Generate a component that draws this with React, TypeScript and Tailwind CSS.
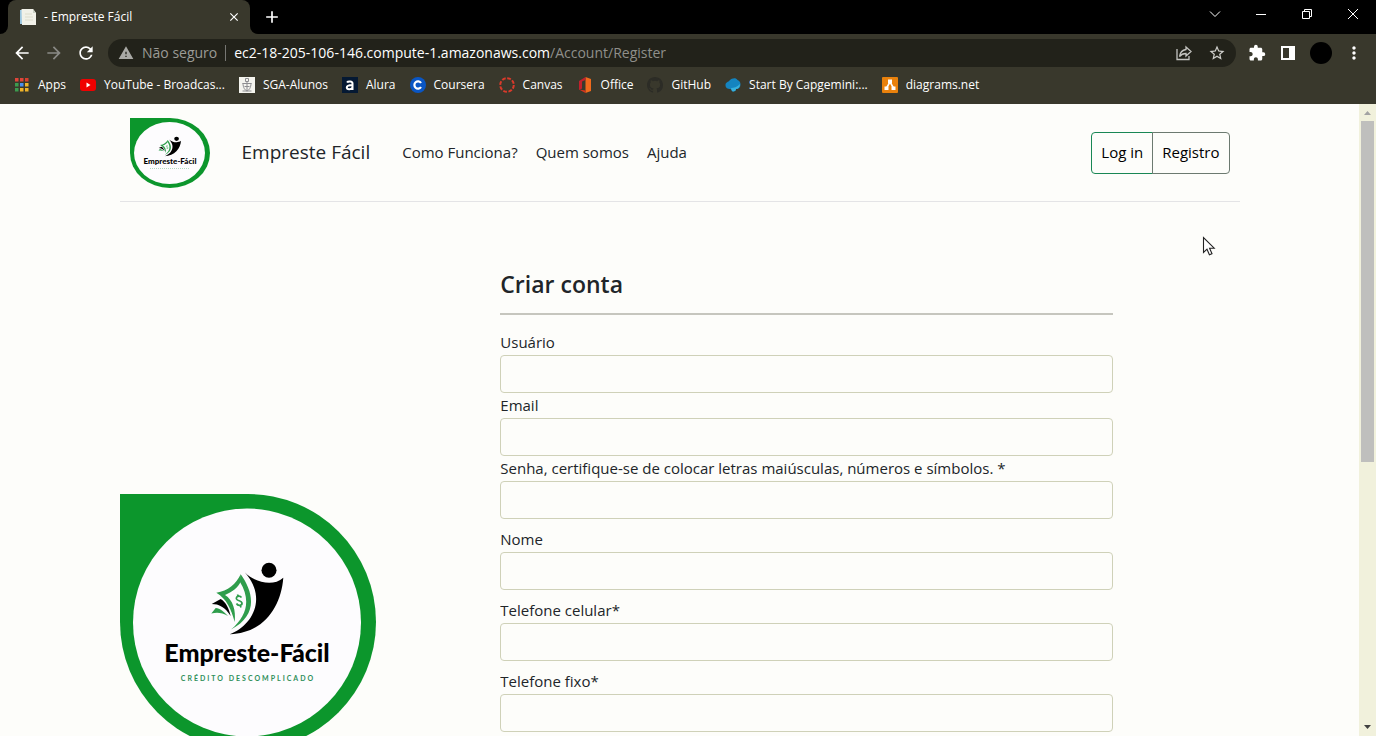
import type { ReactNode } from "react";
import {
  MdArrowBack,
  MdArrowForward,
  MdRefresh,
  MdWarning,
  MdStarBorder,
  MdExtension,
  MdMoreVert,
  MdClose,
  MdAdd,
} from "react-icons/md";

function TabIcon() {
  return (
    <svg className="size-4" viewBox="0 0 16 16" aria-hidden="true">
      <path d="M0 1h5v14H0z" fill="#9cc7e0" />
      <path d="M1.500 0H13l3 4v12H2z" fill="#f1f1e8" />
      <path d="M13 0v4h3z" fill="#c9cfc2" />
      <path d="M5 5h7M5 8h8M5 11h8" stroke="#dcdccb" />
    </svg>
  );
}

function AppsIcon() {
  const colors = ["#e0453a", "#e0453a", "#d8402f", "#3c9b4f", "#4a8ff0", "#f0b429", "#3c9b4f", "#f0b429", "#f0b429"];
  return (
    <svg className="size-4" viewBox="0 0 16 16" aria-hidden="true">
      {colors.map((c, i) => (
        <rect key={i} x={1 + (i % 3) * 5} y={1 + Math.floor(i / 3) * 5} width="3.500" height="3.500" fill={c} />
      ))}
    </svg>
  );
}

function YoutubeIcon() {
  return (
    <svg className="size-4" viewBox="0 0 16 16" aria-hidden="true">
      <rect x="0" y="2" width="16" height="12" rx="3" fill="#f00000" />
      <path d="M6.500 5.500v5l4-2.500z" fill="#fff" />
    </svg>
  );
}

function SgaIcon() {
  return (
    <svg className="size-4" viewBox="0 0 16 16" aria-hidden="true">
      <rect width="16" height="16" fill="#f4f4ee" />
      <path d="M6.500 1.500h3v3h-3zM3.500 6.500h9M4 6c0 5 2 7 4 8 2-1 4-3 4-8M8 4v10M5.500 9.500h5M3.500 14h9" stroke="#8d8d90" fill="none" />
    </svg>
  );
}

function AluraIcon() {
  return (
    <svg className="size-4" viewBox="0 0 16 16" aria-hidden="true">
      <rect width="16" height="16" fill="#051933" />
      <path d="M5 5.500c1-1.500 5.500-1.500 5.500 1V13M10.500 8C7 8 4.800 8.500 4.800 10.500S9 13 10.500 10.500" stroke="#fff" strokeWidth="2" fill="none" />
    </svg>
  );
}

function CourseraIcon() {
  return (
    <svg className="size-4" viewBox="0 0 16 16" aria-hidden="true">
      <circle cx="8" cy="8" r="8" fill="#0a56c4" />
      <path d="M11 6a3.600 3.600 0 1 0 0 4" stroke="#fff" strokeWidth="2.200" fill="none" />
    </svg>
  );
}

function CanvasIcon() {
  return (
    <svg className="size-4" viewBox="0 0 16 16" aria-hidden="true">
      <circle cx="8" cy="8" r="6.800" fill="none" stroke="#d93a2b" strokeWidth="2" strokeDasharray="3.800 1.540" />
    </svg>
  );
}

function OfficeIcon() {
  return (
    <svg className="size-4" viewBox="0 0 16 16" aria-hidden="true">
      <path d="M8.500 0L14 2v12l-5.500 2z" fill="#f06a1c" />
      <path d="M8.500 0v3L5 4.500v7L2 13V4z" fill="#c1202c" />
      <path d="M2 12.500l6.500 1V16z" fill="#d8331d" />
    </svg>
  );
}

function GithubIcon() {
  return (
    <svg className="size-4" viewBox="0 0 16 16" aria-hidden="true">
      <path
        fill="#2c2c26"
        d="M8 0C3.580 0 0 3.580 0 8c0 3.540 2.290 6.530 5.470 7.590.400.070.550-.170.550-.380v-1.490c-2.010.370-2.530-.490-2.690-.940-.090-.230-.480-.940-.820-1.130-.280-.150-.680-.520-.010-.530.630-.010 1.080.580 1.230.820.720 1.210 1.870.870 2.330.660.070-.520.280-.870.510-1.070-1.780-.200-3.640-.890-3.640-3.950 0-.870.310-1.590.820-2.150-.080-.200-.360-1.020.080-2.120 0 0 .670-.210 2.200.820a7.600 7.600 0 0 1 4 0c1.530-1.040 2.200-.820 2.200-.820.440 1.100.160 1.920.080 2.120.510.560.820 1.270.820 2.150 0 3.070-1.870 3.750-3.650 3.950.290.250.540.730.540 1.480v2.200c0 .210.150.460.550.380A8 8 0 0 0 16 8c0-4.420-3.580-8-8-8z"
      />
    </svg>
  );
}

function CapgeminiIcon() {
  return (
    <svg className="size-4" viewBox="0 0 16 16" aria-hidden="true">
      <path d="M0.500 8c0-3 3-3 4-4.500C7 1 11 .500 12.500 3c2 .500 3 2.500 3 4.500 0 3-2 4.500-4.500 4.500 0 1.500-1 2.500-3 2.500-1 0-1.500-1.500-2.500-2.500-3 0-5-1-5-4z" fill="#1484c0" />
      <path d="M6 11c3 0 6-1 9-4 0 3-1.500 5-4 5 0 1.500-1 2.500-3 2.500-1 0-1.500-1.500-2-3.500z" fill="#37b1dd" />
    </svg>
  );
}

function DiagramsIcon() {
  return (
    <svg className="size-4" viewBox="0 0 16 16" aria-hidden="true">
      <rect width="16" height="16" rx="1" fill="#e9810c" />
      <path d="M8 5L4.500 11M8 5l3.500 6" stroke="#fff" strokeWidth="1.500" />
      <path d="M6 2.500h4v4H6zM2.500 9.500h4v3.500h-4zM9.500 9.500h4v3.500h-4z" fill="#fff" />
    </svg>
  );
}

const bookmarks: { label: string; icon: ReactNode }[] = [
  { label: "Apps", icon: <AppsIcon /> },
  { label: "YouTube - Broadcas...", icon: <YoutubeIcon /> },
  { label: "SGA-Alunos", icon: <SgaIcon /> },
  { label: "Alura", icon: <AluraIcon /> },
  { label: "Coursera", icon: <CourseraIcon /> },
  { label: "Canvas", icon: <CanvasIcon /> },
  { label: "Office", icon: <OfficeIcon /> },
  { label: "GitHub", icon: <GithubIcon /> },
  { label: "Start By Capgemini:...", icon: <CapgeminiIcon /> },
  { label: "diagrams.net", icon: <DiagramsIcon /> },
];

function WindowButton({ label, children }: { label: string; children: ReactNode }) {
  return (
    <button type="button" aria-label={label} className="flex h-7 w-[46px] items-center justify-center">
      <svg className="size-3" viewBox="0 0 12 12" fill="none" stroke="#fff" aria-hidden="true">
        {children}
      </svg>
    </button>
  );
}

function BrowserChrome() {
  return (
    <header className="shrink-0 bg-[#39382c] text-white">
      <div className="flex h-[34px] items-end bg-black">
        <div className="flex h-full w-2 items-end bg-[#39382c]">
          <div className="h-full w-full rounded-br-lg bg-black" />
        </div>
        <div className="flex h-[34px] w-[242px] items-center gap-2 rounded-t-lg bg-[#39382c] pr-2 pl-3">
          <TabIcon />
          <span className="flex-1 truncate text-xs">- Empreste Fácil</span>
          <button type="button" aria-label="Fechar guia" className="flex size-4 items-center justify-center">
            <MdClose className="size-3.5" />
          </button>
        </div>
        <div className="flex h-full w-2 items-end bg-[#39382c]">
          <div className="h-full w-full rounded-bl-lg bg-black" />
        </div>
        <button type="button" aria-label="Nova guia" className="flex h-[34px] w-7 items-center justify-center">
          <MdAdd className="size-5" />
        </button>
        <div className="ml-auto flex h-[34px] items-start">
          <WindowButton label="Pesquisar guias">
            <path d="M1 3.500l5 5 5-5" />
          </WindowButton>
          <WindowButton label="Minimizar">
            <path d="M1 6.500h10" />
          </WindowButton>
          <WindowButton label="Restaurar">
            <path d="M1.500 3.500h7v7h-7zM3.500 3.500v-2h7v7h-2" />
          </WindowButton>
          <WindowButton label="Fechar">
            <path d="M1 1l10 10M11 1L1 11" />
          </WindowButton>
        </div>
      </div>

      <div className="flex h-[38px] items-center px-3">
        <div className="flex items-center gap-3">
          <button type="button" aria-label="Voltar">
            <MdArrowBack className="size-5" />
          </button>
          <button type="button" aria-label="Avançar" className="text-[#8a8a86]">
            <MdArrowForward className="size-5" />
          </button>
          <button type="button" aria-label="Recarregar">
            <MdRefresh className="size-5" />
          </button>
        </div>
        <div className="ml-3 flex h-7 flex-1 items-center rounded-full bg-[#22221a] px-2.5 text-sm">
          <MdWarning className="size-4 text-[#a9a9a5]" />
          <span className="ml-2 text-[#9b9b96]">Não seguro</span>
          <span className="mx-2 h-4 w-px bg-[#777773]" />
          <span className="flex-1 truncate text-[#8f8f8a]">
            <span className="text-white">ec2-18-205-106-146.compute-1.amazonaws.com</span>/Account/Register
          </span>
          <button type="button" aria-label="Compartilhar" className="mr-4">
            <svg className="size-4" viewBox="0 0 16 16" fill="none" stroke="#c4c4c0" strokeWidth="1.300" aria-hidden="true">
              <path d="M1 4v10.500h12V11" />
              <path d="M10 2l5 4.500-5 4.500V8.500C7 8.500 5 9.500 3.500 11.500 4 8 6 5 10 4.500z" />
            </svg>
          </button>
          <button type="button" aria-label="Favoritar" className="text-[#d0d0cc]">
            <MdStarBorder className="size-[18px]" />
          </button>
        </div>
        <div className="ml-3 flex items-center gap-3">
          <button type="button" aria-label="Extensões">
            <MdExtension className="size-[18px]" />
          </button>
          <button type="button" aria-label="Painel lateral" className="px-0.5">
            <svg className="size-4" viewBox="0 0 16 16" aria-hidden="true">
              <path fillRule="evenodd" d="M1 1h14v14H1zM3 3v10h6V3z" fill="#fff" />
            </svg>
          </button>
          <button type="button" aria-label="Perfil" className="size-[22px] rounded-full bg-black" />
          <button type="button" aria-label="Menu">
            <MdMoreVert className="size-5" />
          </button>
        </div>
      </div>

      <nav aria-label="Favoritos" className="flex h-8 items-start gap-3.5 overflow-hidden pt-1 pl-3.5">
        {bookmarks.map((b) => (
          <a key={b.label} href="#" className="flex h-[18px] shrink-0 items-center gap-2 text-xs whitespace-nowrap">
            {b.icon}
            {b.label}
          </a>
        ))}
      </nav>
    </header>
  );
}

function LogoMark() {
  return (
    <>
      <circle cx="149" cy="76.300" r="7.500" fill="#000" />
      <path d="M124.700 78.300C133 87 152 94 163.300 83.700C161 113 144 139 109.700 140.300C132 132 148 104 124.700 78.300Z" fill="#000" />
      <path d="M120.700 80.300C134 99 138 121 111 135.500C127 122 131 106 120 88Z" fill="#2f9d4c" />
      <path d="M120.700 80.300C116 90 108 97 96.300 98.700C107 105 111 115 114.700 128C116 116 113 106 105 101C112 98 118 94 121 87Z" fill="#2f9d4c" />
      <path d="M91.700 110L100.700 105C106 108 109 115 110.700 122C105 113 99 110 91.700 110Z" fill="#000" />
      <path d="M91.300 119.500L95.700 114C100 114 104 118 108 122C102 118.500 97 118 91.300 119.500Z" fill="#2f9d4c" />
      <path
        d="M121.500 103.500C119.500 101 115.500 102.500 116.500 105C117.500 107.500 121.500 106 122 109C122.300 111.500 118 112.500 116.500 109.500M117.500 100.500L118.300 102.500M120.300 111.500L121 113.500"
        fill="none"
        stroke="#2f9d4c"
        strokeWidth="1.700"
      />
    </>
  );
}

function LargeLogo() {
  return (
    <svg className="w-64 shrink-0" viewBox="0 0 256 256" role="img" aria-label="Empreste-Fácil">
      <path d="M0 0H128A128 128 0 1 1 0 128Z" fill="#0c962c" />
      <circle cx="127" cy="128.500" r="114" fill="#fdfcfe" />
      <LogoMark />
      <text x="127" y="168" textAnchor="middle" className="font-['Lato'] text-[25px] font-black" fill="#000">
        Empreste-Fácil
      </text>
      <text x="128" y="187" textAnchor="middle" className="font-['Lato'] text-[7px] font-bold tracking-[2px]" fill="#2f8f5a">
        CRÉDITO DESCOMPLICADO
      </text>
    </svg>
  );
}

function SmallLogo() {
  return (
    <svg className="w-20 shrink-0" viewBox="0 0 80 70" role="img" aria-label="Empreste-Fácil">
      <path d="M0 0H40A40 35 0 1 1 0 35Z" fill="#0c962c" />
      <ellipse cx="39.500" cy="35" rx="35.500" ry="31" fill="#fdfcfe" />
      <g transform="scale(0.3125 0.273)">
        <LogoMark />
      </g>
      <text x="40" y="46" textAnchor="middle" className="font-['Lato'] text-[8px] font-black" fill="#000">
        Empreste-Fácil
      </text>
      <path d="M20 50.500h40" stroke="#b5d9c1" strokeDasharray="1 1" />
    </svg>
  );
}

function Field({ id, label, type = "text", spaced = false }: { id: string; label: string; type?: string; spaced?: boolean }) {
  return (
    <div className={spaced ? "mt-2" : ""}>
      <label htmlFor={id} className="block h-[25px] truncate leading-6">
        {label}
      </label>
      <input
        id={id}
        type={type}
        className="block h-[38px] w-full rounded border border-[#cfd1b8] bg-transparent px-3 outline-none"
      />
    </div>
  );
}

function Scrollbar() {
  return (
    <div className="flex w-[17px] shrink-0 flex-col items-center bg-[#f1f1dc]" aria-hidden="true">
      <svg className="h-[17px] w-[17px] shrink-0" viewBox="0 0 17 17">
        <path d="M5 11l3.500-4 3.500 4z" fill="#a3a3a3" />
      </svg>
      <div className="flex w-full flex-1 flex-col px-0.5">
        <div className="h-[57%] w-full bg-[#bfbfbd]" />
      </div>
      <svg className="h-[17px] w-[17px] shrink-0" viewBox="0 0 17 17">
        <path d="M5 6l3.500 4L12 6z" fill="#404040" />
      </svg>
    </div>
  );
}

export default function App() {
  return (
    <div className="relative flex h-screen flex-col overflow-hidden bg-[#fdfdfa] font-['Open_Sans','Noto_Sans',sans-serif]">
      <BrowserChrome />
      <div className="flex min-h-0 flex-1">
        <div className="min-w-0 flex-1 overflow-hidden text-[15px] text-[#212529]">
          <div className="mx-auto max-w-[1120px]">
            <nav aria-label="Principal" className="flex h-[98px] items-center border-b border-[#e4e4e6] px-2.5">
              <SmallLogo />
              <a href="#" className="ml-8 text-[19px]">
                Empreste Fácil
              </a>
              <div className="ml-8 flex gap-[18px]">
                <a href="#">Como Funciona?</a>
                <a href="#">Quem somos</a>
                <a href="#">Ajuda</a>
              </div>
              <div className="ml-auto flex text-black">
                <a href="#" className="flex h-[42px] items-center rounded-l border border-[#198754] px-[9px]">
                  Log in
                </a>
                <a href="#" className="-ml-px flex h-[42px] items-center rounded-r border border-[#6c7a70] px-[9px]">
                  Registro
                </a>
              </div>
            </nav>

            <main className="grid grid-cols-[340fr_547fr_113fr] pt-16">
              <aside className="pt-[228px]">
                <LargeLogo />
              </aside>
              <form>
                <h1 className="text-[23px] leading-9 font-semibold">Criar conta</h1>
                <hr className="mt-[11px] mb-[15px] border-t-2 border-[#c6c6be]" />
                <Field id="usuario" label="Usuário" />
                <Field id="email" label="Email" type="email" />
                <Field id="senha" label="Senha, certifique-se de colocar letras maiúsculas, números e símbolos. *" type="password" />
                <Field id="nome" label="Nome" spaced />
                <Field id="celular" label="Telefone celular*" type="tel" spaced />
                <Field id="fixo" label="Telefone fixo*" type="tel" spaced />
              </form>
            </main>
          </div>
        </div>
        <Scrollbar />
      </div>
      <svg className="pointer-events-none absolute top-[236px] left-[1202px] h-5 w-3.5" viewBox="0 0 14 20" aria-hidden="true">
        <path d="M1.500 1.500v15l3.500-3.300 2.400 5.600 2.600-1.100-2.400-5.500h4.600z" fill="#fff" stroke="#222" strokeWidth="1.100" />
      </svg>
    </div>
  );
}
